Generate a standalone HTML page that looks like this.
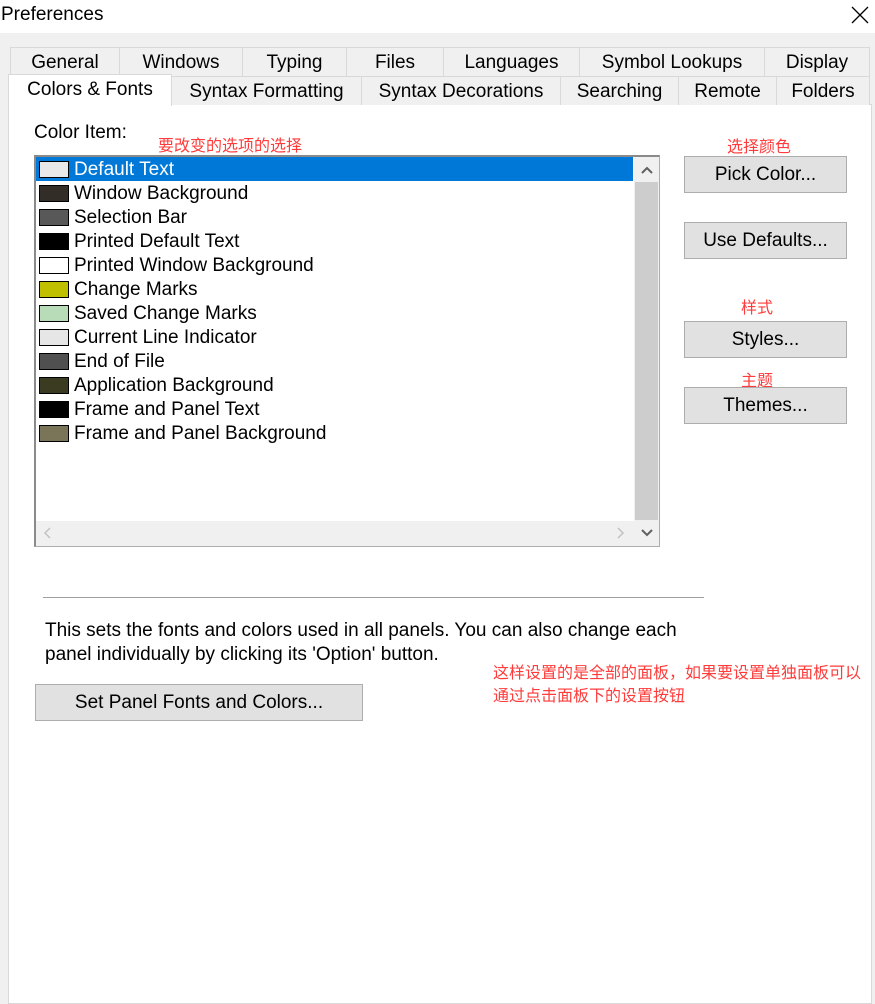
<!DOCTYPE html>
<html><head><meta charset="utf-8"><style>
*{box-sizing:border-box;margin:0;padding:0}
body{width:875px;height:989px;background:#f0f0f0;position:relative;overflow:hidden;font-family:"Liberation Sans","Noto Sans CJK SC",sans-serif;font-size:19px;color:#000}
.a{position:absolute}
.title{left:0;top:0;width:875px;height:33px;background:#fff}
.tab{position:absolute;height:29px;border:1px solid #d9d9d9;border-bottom:none;background:#f0f0f0;text-align:center;line-height:30px;font-size:19px}
.panel{left:8px;top:104px;width:864px;height:900px;background:#fff;border:1px solid #d9d9d9}
.btn{position:absolute;background:#e1e1e1;border:1px solid #adadad;text-align:center;font-size:19px}
.red{position:absolute;color:#ff3b3b;font-size:16px}
.row{position:absolute;left:36px;height:24px;width:597px;line-height:24px}
.sw{position:absolute;left:3px;top:4px;width:30px;height:17px;border:1px solid #000}
.row span{position:absolute;left:38px;top:1px}
</style></head><body>
<div class="a title"></div>
<div class="a" style="left:1px;top:4px;font-size:19px">Preferences</div>
<svg class="a" style="left:851px;top:6px" width="18" height="18"><path d="M1 1L17 17M17 1L1 17" stroke="#000" stroke-width="1.3"/></svg>

<div class="tab" style="left:10px;top:47px;width:110px">General</div>
<div class="tab" style="left:119px;top:47px;width:124px">Windows</div>
<div class="tab" style="left:242px;top:47px;width:105px">Typing</div>
<div class="tab" style="left:346px;top:47px;width:98px">Files</div>
<div class="tab" style="left:443px;top:47px;width:137px">Languages</div>
<div class="tab" style="left:579px;top:47px;width:186px">Symbol Lookups</div>
<div class="tab" style="left:764px;top:47px;width:106px">Display</div>

<div class="a panel"></div>
<div class="tab" style="left:171px;top:76px;width:191px">Syntax Formatting</div>
<div class="tab" style="left:361px;top:76px;width:200px">Syntax Decorations</div>
<div class="tab" style="left:560px;top:76px;width:119px">Searching</div>
<div class="tab" style="left:678px;top:76px;width:99px">Remote</div>
<div class="tab" style="left:776px;top:76px;width:94px">Folders</div>
<div class="tab" style="left:8px;top:74px;width:164px;height:32px;background:#fff;line-height:30px;border-color:#d9d9d9">Colors &amp; Fonts</div>

<div class="a" style="left:34px;top:122px">Color Item:</div>
<div class="red" style="left:158px;top:132px">要改变的选项的选择</div>
<div class="red" style="left:727px;top:133px">选择颜色</div>
<div class="red" style="left:741px;top:294px">样式</div>
<div class="red" style="left:741px;top:367px">主题</div>

<div class="a" style="left:34px;top:155px;width:626px;height:392px;border:1px solid #adadad;border-top:2px solid #8a8a8a;border-left:2px solid #8a8a8a;background:#fff"></div>
<div class="a" style="left:36px;top:157px;width:597px;height:24px;background:#0078d7"></div>
<div class="row" style="top:157px;color:#fff"><div class="sw" style="background:#e8e8e8"></div><span>Default Text</span></div>
<div class="row" style="top:181px"><div class="sw" style="background:#322e27"></div><span>Window Background</span></div>
<div class="row" style="top:205px"><div class="sw" style="background:#585858"></div><span>Selection Bar</span></div>
<div class="row" style="top:229px"><div class="sw" style="background:#000"></div><span>Printed Default Text</span></div>
<div class="row" style="top:253px"><div class="sw" style="background:#fff"></div><span>Printed Window Background</span></div>
<div class="row" style="top:277px"><div class="sw" style="background:#c0c000"></div><span>Change Marks</span></div>
<div class="row" style="top:301px"><div class="sw" style="background:#b8dcb8"></div><span>Saved Change Marks</span></div>
<div class="row" style="top:325px"><div class="sw" style="background:#e6e6e6"></div><span>Current Line Indicator</span></div>
<div class="row" style="top:349px"><div class="sw" style="background:#505050"></div><span>End of File</span></div>
<div class="row" style="top:373px"><div class="sw" style="background:#3a3b20"></div><span>Application Background</span></div>
<div class="row" style="top:397px"><div class="sw" style="background:#000"></div><span>Frame and Panel Text</span></div>
<div class="row" style="top:421px"><div class="sw" style="background:#7a7458"></div><span>Frame and Panel Background</span></div>

<div class="a" style="left:634px;top:157px;width:25px;height:389px;background:#f0f0f0"></div>
<div class="a" style="left:635px;top:182px;width:23px;height:338px;background:#cdcdcd"></div>
<svg class="a" style="left:640px;top:164px" width="14" height="12"><path d="M2 9L7 4L12 9" stroke="#606060" stroke-width="2" fill="none"/></svg>
<svg class="a" style="left:640px;top:527px" width="14" height="12"><path d="M2 3L7 8L12 3" stroke="#606060" stroke-width="2" fill="none"/></svg>
<div class="a" style="left:36px;top:521px;width:598px;height:25px;background:#f0f0f0"></div>
<svg class="a" style="left:42px;top:526px" width="12" height="14"><path d="M8 2L3 7L8 12" stroke="#c2c2c2" stroke-width="1.5" fill="none"/></svg>
<svg class="a" style="left:614px;top:526px" width="12" height="14"><path d="M4 2L9 7L4 12" stroke="#c2c2c2" stroke-width="1.5" fill="none"/></svg>

<div class="btn" style="left:684px;top:156px;width:163px;height:37px;line-height:36px">Pick Color...</div>
<div class="btn" style="left:684px;top:222px;width:163px;height:37px;line-height:36px">Use Defaults...</div>
<div class="btn" style="left:684px;top:321px;width:163px;height:37px;line-height:36px">Styles...</div>
<div class="btn" style="left:684px;top:387px;width:163px;height:37px;line-height:36px">Themes...</div>

<div class="a" style="left:43px;top:597px;width:661px;height:1px;background:#a0a0a0"></div>
<div class="a" style="left:45px;top:619px;line-height:24px">This sets the fonts and colors used in all panels. You can also change each<br>panel individually by clicking its 'Option' button.</div>
<div class="red" style="left:493px;top:662px;line-height:23px;font-size:16px">这样设置的是全部的面板，如果要设置单独面板可以<br>通过点击面板下的设置按钮</div>
<div class="btn" style="left:35px;top:684px;width:328px;height:37px;line-height:36px">Set Panel Fonts and Colors...</div>
</body></html>
